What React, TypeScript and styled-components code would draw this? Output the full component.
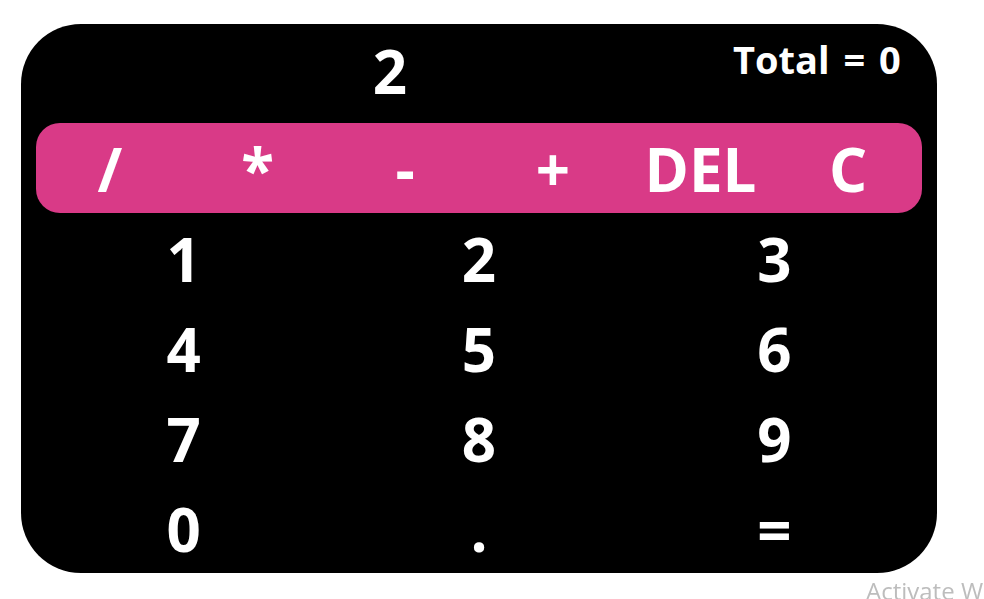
import React from "react";
import styled, { createGlobalStyle } from "styled-components";

const Global = createGlobalStyle`
  html, body { margin: 0; padding: 0; background: #ffffff; }
  body { font-family: "Open Sans", "Noto Sans", sans-serif; overflow: hidden; }
`;

const Page = styled.div`
  width: 984px;
  height: 599px;
  padding: 24px 0 0 21px;
  box-sizing: border-box;
`;

const Card = styled.div`
  width: 916px;
  height: 549px;
  background: #000000;
  border-radius: 60px;
  padding: 0 15px;
  box-sizing: border-box;
  display: flex;
  flex-direction: column;
  color: #ffffff;
  font-weight: 700;
`;

const Top = styled.div`
  height: 100px;
  display: grid;
  grid-template-columns: 1fr 189px;
  align-items: start;
`;

const Display = styled.div`
  text-align: center;
  font-size: 60px;
  line-height: 95px;
  padding-left: 11px;
`;

const Total = styled.div`
  text-align: right;
  font-size: 38px;
  line-height: 1;
  word-spacing: 4px;
  white-space: nowrap;
  padding: 16px 23px 0 0;
`;

const OpBar = styled.div`
  height: 90px;
  background: #d93a87;
  border-radius: 24px;
  display: grid;
  grid-template-columns: repeat(6, 1fr);
  align-items: center;
`;

const Key = styled.div`
  text-align: center;
  font-size: 60px;
  line-height: 92px;
  height: 90px;
`;

const Pad = styled.div`
  display: grid;
  grid-template-columns: repeat(3, 1fr);
  grid-auto-rows: 90px;
`;

const Watermark = styled.div`
  position: fixed;
  left: 866px;
  top: 579px;
  font-family: "Open Sans", "Noto Sans", sans-serif;
  font-weight: 400;
  font-size: 24px;
  line-height: 1;
  color: #bdbdbd;
  white-space: nowrap;
`;

const ops = ["/", "*", "-", "+", "DEL", "C"];
const digits = ["1", "2", "3", "4", "5", "6", "7", "8", "9", "0", ".", "="];

export default function App() {
  return (
    <>
      <Global />
      <Page>
        <Card>
          <Top>
            <Display>2</Display>
            <Total>Total = 0</Total>
          </Top>
          <OpBar>
            {ops.map((o) => (
              <Key key={o}>{o}</Key>
            ))}
          </OpBar>
          <Pad>
            {digits.map((d) => (
              <Key key={d}>{d}</Key>
            ))}
          </Pad>
        </Card>
      </Page>
      <Watermark>Activate W</Watermark>
    </>
  );
}
